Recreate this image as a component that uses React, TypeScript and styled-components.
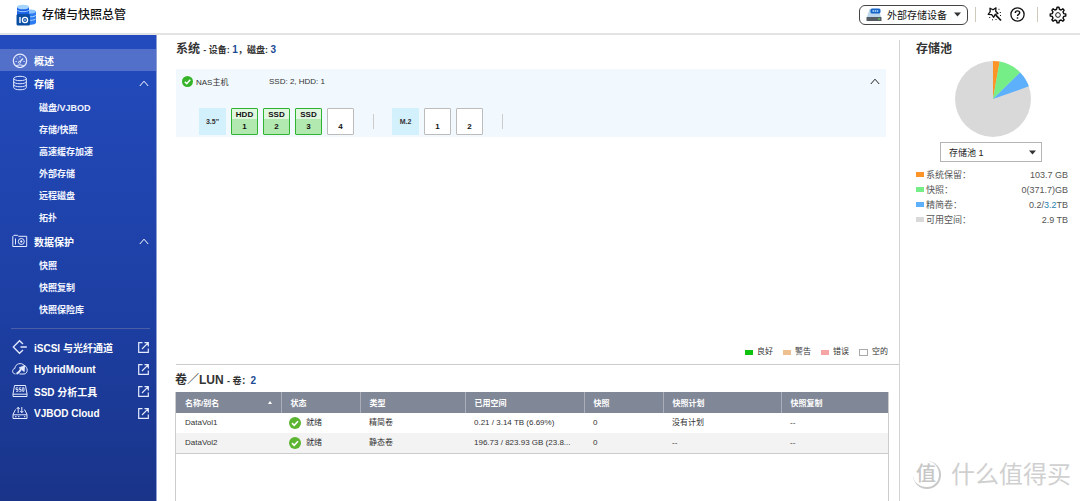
import React from 'react';
import styled, { createGlobalStyle, css } from 'styled-components';

const Global = createGlobalStyle`
  *, *::before, *::after { box-sizing: border-box; }
  body {
    margin: 0;
    background: #fff;
    color: #333;
    font-family: "Liberation Sans", "Noto Sans CJK SC", sans-serif;
    font-size: 8px;
  }
  #root { min-height: 100vh; display: flex; flex-direction: column; }
  h1, h2, ul, dl, dd { margin: 0; padding: 0; }
  ul { list-style: none; }
  svg { display: block; flex: none; }
`;

/* ---------- header ---------- */
const Header = styled.header`
  display: flex;
  align-items: center;
  justify-content: space-between;
  height: 35px;
  padding: 0 13px 4px 16px;
  border-bottom: 2px solid #e3e3e3;
`;
const Brand = styled.div`
  display: flex;
  align-items: center;
  gap: 5px;
`;
const Title = styled.h1`
  font-size: 12px;
  line-height: 20px;
  font-weight: 500;
  color: #111;
`;
const Tools = styled.div`
  display: flex;
  align-items: center;
`;
const DeviceButton = styled.button`
  display: flex;
  align-items: center;
  gap: 5px;
  height: 20px;
  padding: 0 6px;
  border: 1px solid #444;
  border-radius: 6px;
  background: #fff;
  color: #111;
  font: inherit;
  font-size: 10px;
`;
const DeviceName = styled.span`
  margin-right: 2px;
`;
const Divider = styled.span`
  width: 1px;
  height: 15px;
  margin: 0 11px 0 7px;
  background: #cfcabb;
`;
const ToolGroup = styled.div`
  display: flex;
  align-items: center;
  gap: 8px;
  margin-right: 5px;
`;
const IconButton = styled.button`
  display: flex;
  padding: 0;
  border: 0;
  background: none;
  color: #111;
`;

/* ---------- sidebar ---------- */
const Shell = styled.div`
  flex: 1;
  display: flex;
`;
const Sidebar = styled.nav`
  flex: none;
  width: 157px;
  padding-top: 14px;
  background: linear-gradient(#234bbd, #1d3fa3 60%, #193489);
  border-right: 1px solid #8fa0d4;
  color: #fff;
`;
const NavLink = styled.a<{ $active?: boolean }>`
  display: flex;
  align-items: center;
  gap: 6px;
  height: 22px;
  margin-bottom: ${(p) => (p.$active ? 1 : 0)}px;
  padding: 0 7px 0 12px;
  background: ${(p) => (p.$active ? '#5270c9' : 'transparent')};
  color: #fff;
  font-size: 10px;
  font-weight: 700;
  text-decoration: none;
`;
const NavLabel = styled.span`
  flex: 1;
`;
const SubLink = styled.a`
  display: flex;
  align-items: center;
  height: 22px;
  padding-left: 39px;
  color: #f2f5ff;
  font-size: 9px;
  font-weight: 700;
  text-decoration: none;
`;
const NavGroup = styled.ul`
  padding: 2px 0;
`;
const NavRule = styled.div`
  height: 1px;
  margin: 6px 6px 7px 11px;
  background: #4a5fa8;
`;

/* ---------- main ---------- */
const Main = styled.main`
  flex: 1;
  min-width: 0;
  display: flex;
  flex-direction: column;
  border-right: 1px solid #d4d4d4;
  margin-top: 5px;
`;
const SystemPanel = styled.section`
  display: flex;
  flex-direction: column;
  height: 325px;
  margin-left: 19px;
  border-bottom: 1px solid #ccc;
`;
const SectionTitle = styled.h2`
  font-size: 12px;
  line-height: 18px;
  font-weight: 700;
  color: #333;
  small { font-size: 9px; }
  b { font-size: 10px; color: #1c4a94; }
`;
const Enclosure = styled.div`
  margin: 10px 13px 0 0;
  padding: 0 6px 2px 6px;
  background: #f1f9fe;
`;
const EnclosureHead = styled.div`
  display: flex;
  align-items: center;
  height: 24px;
  gap: 3px;
`;
const HostName = styled.span`
  width: 70px;
`;
const Counts = styled.span`
  flex: 1;
`;
const PlainButton = styled.button`
  display: flex;
  padding: 0;
  border: 0;
  background: none;
  color: #222;
`;
const Slots = styled.div`
  display: flex;
  align-items: center;
  gap: 5px;
  padding: 15px 0 0 17px;
`;
const slotBox = css`
  width: 27px;
  height: 27px;
  font-size: 8px;
  font-weight: 700;
`;
const SlotKind = styled.span`
  ${slotBox}
  display: flex;
  align-items: center;
  justify-content: center;
  background: #d3f0fd;
  font-size: 7px;
`;
const SlotButton = styled.button<{ $used?: boolean }>`
  ${slotBox}
  display: flex;
  flex-direction: column;
  align-items: center;
  justify-content: flex-end;
  padding: 0 0 1px;
  border: 1px solid ${(p) => (p.$used ? '#2fb42f' : '#bcbcbc')};
  border-radius: 1px;
  background: ${(p) => (p.$used ? 'linear-gradient(#e0f6de 10px, #b2e9b0 10px)' : '#fff')};
  color: #111;
  font-family: inherit;
  line-height: 12px;
`;
const SlotRule = styled.span`
  width: 1px;
  height: 15px;
  margin: 0 13px 0 14px;
  background: #ccc;
`;
const Legend = styled.ul`
  display: flex;
  justify-content: flex-end;
  gap: 10px;
  margin-top: auto;
  padding: 0 11px 6px 0;
  line-height: 12px;
`;
const LegendItem = styled.li`
  display: flex;
  align-items: center;
  gap: 4px;
`;
const Swatch = styled.span<{ $color: string; $outline?: boolean }>`
  width: ${(p) => (p.$outline ? 9 : 8)}px;
  height: ${(p) => (p.$outline ? 7 : 5)}px;
  background: ${(p) => p.$color};
  border: ${(p) => (p.$outline ? '1px solid #aaa' : '0')};
`;
const VolumePanel = styled.section`
  flex: 1;
  display: flex;
  flex-direction: column;
  padding: 6px 10px 0 18px;
`;
const TableFrame = styled.div`
  flex: 1;
  margin-top: 2px;
  border: solid #ccc;
  border-width: 0 1px;
`;
const Table = styled.table`
  width: 100%;
  table-layout: fixed;
  border-collapse: collapse;
  border-bottom: 1px solid #ccc;
  th, td {
    padding: 0 9px;
    text-align: left;
    white-space: nowrap;
    overflow: hidden;
    text-overflow: ellipsis;
  }
  th {
    height: 21px;
    background: #808797;
    color: #fff;
    border-left: 1px solid #a9aeba;
  }
  th:first-child { border-left: 0; }
  td { height: 20px; line-height: 12px; }
  tbody tr:nth-child(even) { background: #f3f3f3; }
`;
const Col = styled.col<{ $w: number }>`
  width: ${(p) => p.$w}px;
`;
const HeadCell = styled.span`
  display: flex;
  align-items: center;
  justify-content: space-between;
`;
const Status = styled.span`
  display: flex;
  align-items: center;
  gap: 5px;
  margin-left: -1px;
`;

/* ---------- pool ---------- */
const Pool = styled.aside`
  flex: none;
  width: 180px;
  display: flex;
  flex-direction: column;
  padding: 5px 12px 8px 16px;
`;
const Chart = styled.div`
  display: flex;
  justify-content: center;
  padding: 3px 0 5px 2px;
`;
const SelectWrap = styled.label`
  display: grid;
  align-items: center;
  width: 102px;
  margin: 0 auto 5px 24px;
  > * { grid-area: 1 / 1; }
  > svg { justify-self: end; margin-right: 6px; pointer-events: none; }
`;
const Select = styled.select`
  appearance: none;
  width: 100%;
  height: 20px;
  padding: 1px 8px 0;
  border: 1px solid #b5b5b5;
  border-radius: 0;
  background: #fff;
  color: #222;
  font: inherit;
  font-size: 9px;
`;
const Usage = styled.dl`
  font-size: 9px;
  color: #555;
`;
const UsageRow = styled.div`
  display: flex;
  align-items: center;
  height: 15px;
  dt { flex: 1; display: flex; align-items: center; gap: 2px; }
  b { font-weight: 400; color: #1f7fae; }
`;
const Watermark = styled.div`
  display: flex;
  align-items: center;
  gap: 10px;
  margin: auto -2px 0 -3px;
  color: #d0d0d0;
  font-size: 24px;
  line-height: 36px;
  white-space: nowrap;
`;
const Seal = styled.span`
  flex: none;
  display: flex;
  align-items: center;
  justify-content: center;
  width: 28px;
  height: 28px;
  border-right: 2px solid #c9c9c9;
  border-bottom: 2px solid #c9c9c9;
  border-radius: 50%;
  color: #c6c6c6;
  font-size: 20px;
  font-weight: 500;
`;

/* ---------- drawings ---------- */
const Caret = () => (
  <svg width="7" height="5" viewBox="0 0 7 5"><path d="M0 0.5H7L3.5 4.5Z" fill="#333" /></svg>
);
const Chevron = () => (
  <svg width="10" height="7" viewBox="0 0 10 7" fill="none" stroke="currentColor"><path d="M0.8 6L5 1.2L9.2 6" /></svg>
);
const Logo = () => (
  <svg width="21" height="22" viewBox="0 0 21 22">
    <path d="M9 7.5v11c0 3 11 3 11 0v-11z" fill="#2c7bf0" />
    <path d="M9 11c1 2.400 10 2.400 11 0M9 14.500c1 2.400 10 2.400 11 0" fill="none" stroke="#a9d2ff" strokeWidth="1" />
    <ellipse cx="14.500" cy="7.500" rx="5.500" ry="2" fill="#8cc4fb" />
    <path d="M1 3v8h12V3z" fill="#1d62e6" />
    <path d="M1 6c1 2.200 11 2.200 12 0" fill="none" stroke="#9accff" strokeWidth="1" />
    <ellipse cx="7" cy="3" rx="6" ry="2.300" fill="#a5d5fd" />
    <rect x="0.500" y="10" width="13.500" height="11.500" rx="1.500" fill="#0b4fa5" />
    <path d="M4 13v6" stroke="#fff" strokeWidth="1.400" />
    <circle cx="9" cy="16" r="2.600" fill="none" stroke="#fff" strokeWidth="1.300" />
    <circle cx="9" cy="16" r="0.800" fill="#fff" />
  </svg>
);
const DriveIcon = () => (
  <svg width="16" height="14" viewBox="0 0 16 14">
    <path d="M3.500 1h9L15 9H1z" fill="#bcd6ee" />
    <rect x="0.500" y="9" width="15" height="4" rx="0.500" fill="#555c63" />
    <rect x="12" y="10.500" width="2" height="1" fill="#6be04d" />
    <rect x="4.500" y="0.500" width="10" height="5" rx="1.500" fill="#1565c8" />
    <path d="M6.500 3h6" stroke="#b8dcff" strokeWidth="1.400" strokeDasharray="1.500 0.600" />
  </svg>
);
const Wand = () => (
  <svg width="15" height="15" viewBox="0 0 15 15" fill="none" stroke="currentColor" strokeWidth="1.300">
    <path d="M3 1.200L6 2.800L9 0.900L8.700 4.300L11 6.500L8.200 7.300L6.700 10.300L4.700 7.700L1.200 7.400L3.200 4.700Z" strokeLinejoin="round" />
    <path d="M8.600 7.800L14 13.500" strokeWidth="1.700" />
    <path d="M11.500 2.300h1M12.800 5.500h1M2.200 10.500h1M5 12.800h1M13 8.500h1M8.500 12.500h1" strokeWidth="1" />
  </svg>
);
const Help = () => (
  <svg width="15" height="15" viewBox="0 0 15 15" fill="none" stroke="currentColor">
    <circle cx="7.500" cy="7.500" r="6.600" strokeWidth="1.300" />
    <path d="M5.300 5.900C5.300 3.100 9.700 3.200 9.700 5.800C9.700 7.400 7.500 7.300 7.500 9.100" strokeWidth="1.400" />
    <path d="M7.500 10.300v1.400" strokeWidth="1.500" />
  </svg>
);
const Gear = () => (
  <svg width="18" height="18" viewBox="0 0 19 19" fill="none" stroke="currentColor" strokeWidth="1.500">
    <path strokeLinejoin="round" d="M8.100 3.400L8.500 1.300H10.500L10.900 3.400L12.800 4.200L14.600 3L16 4.400L14.800 6.200L15.600 8.100L17.700 8.500V10.500L15.600 10.900L14.800 12.800L16 14.600L14.600 16L12.800 14.800L10.900 15.600L10.500 17.700H8.500L8.100 15.600L6.200 14.800L4.400 16L3 14.600L4.200 12.800L3.400 10.900L1.300 10.500V8.500L3.400 8.100L4.200 6.200L3 4.400L4.400 3L6.200 4.200Z" />
    <circle cx="9.500" cy="9.500" r="2.500" strokeWidth="1" />
  </svg>
);
const Check = ({ size, color }: { size: number; color: string }) => (
  <svg width={size} height={size} viewBox="0 0 12 12">
    <circle cx="6" cy="6" r="6" fill={color} />
    <path d="M3 6.200L5.200 8.300L9 4.200" fill="none" stroke="#fff" strokeWidth="1.600" />
  </svg>
);
const NavIcon = ({ children }: { children: React.ReactNode }) => (
  <svg width="16" height="16" viewBox="0 0 16 16" fill="none" stroke="#e4eaff" strokeWidth="1">{children}</svg>
);
const Gauge = () => (
  <NavIcon>
    <circle cx="8" cy="8.800" r="6.700" strokeWidth="1.200" />
    <path d="M8 9.800L11 6.500" strokeWidth="1.300" />
    <circle cx="7.500" cy="10.300" r="1" />
    <path d="M3.500 9.500h1.200M4.700 6l0.800 0.800M8 4.200v1.300M11.500 9.500h1.200M4 14c2.500-1.500 5.500-1.500 8 0" />
  </NavIcon>
);
const Disks = () => (
  <NavIcon>
    <ellipse cx="8" cy="3.500" rx="6.300" ry="2.200" />
    <path d="M1.700 3.500v9c0 3 12.600 3 12.600 0v-9M1.700 6.500c0 3 12.600 3 12.600 0M1.700 9.500c0 3 12.600 3 12.600 0" />
  </NavIcon>
);
const Protect = () => (
  <NavIcon>
    <path d="M0.800 13.500V3.500L2 2.300H5.500L6.500 3.300H14.700V13.500Z" />
    <path d="M3.500 5.500v6" />
    <circle cx="9.300" cy="8.500" r="3" />
    <circle cx="9.300" cy="8.500" r="0.800" fill="#e4eaff" />
  </NavIcon>
);
const Iscsi = () => (
  <NavIcon><path d="M11 5L7.500 1.700L1.300 8L7.500 14.300L11 11M8.500 8H14.800" strokeWidth="1.300" /></NavIcon>
);
const Hybrid = () => (
  <NavIcon>
    <path d="M3.500 13C-0.500 12.600 0 8 2.800 7.500C3.300 2.300 9.500 1.300 12 4.300C16.500 6 16 13 12 13H7.500" />
    <path d="M4.500 12.800C6.500 11.800 8 10 9 8.200" strokeWidth="2" />
    <path d="M7 6.800L13 4.300L12.300 10.800Z" fill="#e4eaff" strokeWidth="0.500" />
  </NavIcon>
);
const Ssd = () => (
  <NavIcon>
    <path d="M1 11L2.500 2.500H13.500L15 11V13.500H1ZM1 11.200H15" />
    <path d="M6 4.800H4V6.500H6V8.300H4M9.200 4.800H7.300V6.500H9.200V8.300H7.300M10.700 4.500V8.300H12V4.800H10.700" strokeWidth="0.900" />
  </NavIcon>
);
const Vjbod = () => (
  <NavIcon>
    <path d="M3.500 4.500L1 9.500V13.500H15V9.500L12.500 4.500M1 9.800H15M3 11.700H4.500M6 11.700H7.500M12 11.700H13.300" />
    <path d="M6.200 8V2.500M4.700 4L6.200 2.200L7.700 4M9.800 2V7.500M8.300 6L9.800 7.800L11.300 6" />
  </NavIcon>
);
const External = () => (
  <svg width="11" height="11" viewBox="0 0 11 11" fill="none" stroke="#e4eaff">
    <path d="M4.500 0.700H0.700V10.300H10.300V6.500M6.500 0.700H10.300V4.500M10.300 0.700L4 7" strokeWidth="1.200" />
  </svg>
);

const slices = [
  { color: '#fd9427', from: 0, to: 0.028 },
  { color: '#76ee87', from: 0.028, to: 0.127 },
  { color: '#5db0fb', from: 0.127, to: 0.196 },
];
const point = (f: number) =>
  `${38 + 38 * Math.sin(2 * Math.PI * f)} ${38 - 38 * Math.cos(2 * Math.PI * f)}`;
const Pie = () => (
  <svg width="76" height="76" viewBox="0 0 76 76">
    <circle cx="38" cy="38" r="38" fill="#d9d9d9" />
    {slices.map((s) => (
      <path key={s.color} fill={s.color} d={`M38 38L${point(s.from)}A38 38 0 0 1 ${point(s.to)}Z`} />
    ))}
  </svg>
);

/* ---------- data ---------- */
const storageItems = ['磁盘/VJBOD', '存储/快照', '高速缓存加速', '外部存储', '远程磁盘', '拓扑'];
const protectItems = ['快照', '快照复制', '快照保险库'];
const tools = [
  { label: 'iSCSI 与光纤通道', icon: <Iscsi /> },
  { label: 'HybridMount', icon: <Hybrid /> },
  { label: 'SSD 分析工具', icon: <Ssd /> },
  { label: 'VJBOD Cloud', icon: <Vjbod /> },
];
/* The fixed table layout stretches these widths in proportion. */
const columns = [
  { label: '名称/别名', width: 105 },
  { label: '状态', width: 79 },
  { label: '类型', width: 105 },
  { label: '已用空间', width: 119 },
  { label: '快照', width: 79 },
  { label: '快照计划', width: 118 },
  { label: '快照复制', width: 107 },
];
const volumes = [
  { name: 'DataVol1', type: '精简卷', used: '0.21 / 3.14 TB (6.69%)', snaps: 0, plan: '没有计划' },
  { name: 'DataVol2', type: '静态卷', used: '196.73 / 823.93 GB (23.8...', snaps: 0, plan: '--' },
];

export default function App() {
  return (
    <>
      <Global />
      <Header>
        <Brand>
          <Logo />
          <Title>存储与快照总管</Title>
        </Brand>
        <Tools>
          <DeviceButton type="button">
            <DriveIcon />
            <DeviceName>外部存储设备</DeviceName>
            <Caret />
          </DeviceButton>
          <Divider />
          <ToolGroup>
            <IconButton type="button" aria-label="向导"><Wand /></IconButton>
            <IconButton type="button" aria-label="帮助"><Help /></IconButton>
          </ToolGroup>
          <Divider />
          <IconButton type="button" aria-label="设置"><Gear /></IconButton>
        </Tools>
      </Header>
      <Shell>
        <Sidebar>
          <NavLink href="#overview" $active><Gauge /><NavLabel>概述</NavLabel></NavLink>
          <NavLink href="#storage"><Disks /><NavLabel>存储</NavLabel><Chevron /></NavLink>
          <NavGroup>
            {storageItems.map((t) => <li key={t}><SubLink href="#storage">{t}</SubLink></li>)}
          </NavGroup>
          <NavLink href="#protect"><Protect /><NavLabel>数据保护</NavLabel><Chevron /></NavLink>
          <NavGroup>
            {protectItems.map((t) => <li key={t}><SubLink href="#protect">{t}</SubLink></li>)}
          </NavGroup>
          <NavRule />
          {tools.map((t) => (
            <NavLink key={t.label} href="#tools">{t.icon}<NavLabel>{t.label}</NavLabel><External /></NavLink>
          ))}
        </Sidebar>
        <Main>
          <SystemPanel>
            <SectionTitle>系统 <small>- 设备: <b>1</b>，磁盘: <b>3</b></small></SectionTitle>
            <Enclosure>
              <EnclosureHead>
                <Check size={11} color="#35b42a" />
                <HostName>NAS主机</HostName>
                <Counts>SSD: 2, HDD: 1</Counts>
                <PlainButton type="button" aria-label="收起"><Chevron /></PlainButton>
              </EnclosureHead>
              <Slots>
                <SlotKind>3.5"</SlotKind>
                <SlotButton type="button" $used><span>HDD</span><span>1</span></SlotButton>
                <SlotButton type="button" $used><span>SSD</span><span>2</span></SlotButton>
                <SlotButton type="button" $used><span>SSD</span><span>3</span></SlotButton>
                <SlotButton type="button"><span>4</span></SlotButton>
                <SlotRule />
                <SlotKind>M.2</SlotKind>
                <SlotButton type="button"><span>1</span></SlotButton>
                <SlotButton type="button"><span>2</span></SlotButton>
                <SlotRule />
              </Slots>
            </Enclosure>
            <Legend>
              <LegendItem><Swatch $color="#0fc20f" />良好</LegendItem>
              <LegendItem><Swatch $color="#efc08f" />警告</LegendItem>
              <LegendItem><Swatch $color="#f5a5a5" />错误</LegendItem>
              <LegendItem><Swatch $color="#fff" $outline />空的</LegendItem>
            </Legend>
          </SystemPanel>
          <VolumePanel>
            <SectionTitle>卷／LUN <small>- 卷：<b>2</b></small></SectionTitle>
            <TableFrame>
              <Table>
                <colgroup>{columns.map((c) => <Col key={c.label} $w={c.width} />)}</colgroup>
                <thead>
                  <tr>
                    {columns.map((c, i) => (
                      <th key={c.label} scope="col">
                        <HeadCell>
                          {c.label}
                          {i === 0 && <svg width="4" height="3" viewBox="0 0 4 3"><path d="M0 3L2 0L4 3Z" fill="#fff" /></svg>}
                        </HeadCell>
                      </th>
                    ))}
                  </tr>
                </thead>
                <tbody>
                  {volumes.map((v) => (
                    <tr key={v.name}>
                      <td>{v.name}</td>
                      <td><Status><Check size={12} color="#5cb531" />就绪</Status></td>
                      <td>{v.type}</td>
                      <td>{v.used}</td>
                      <td>{v.snaps}</td>
                      <td>{v.plan}</td>
                      <td>--</td>
                    </tr>
                  ))}
                </tbody>
              </Table>
            </TableFrame>
          </VolumePanel>
        </Main>
        <Pool>
          <SectionTitle>存储池</SectionTitle>
          <Chart><Pie /></Chart>
          <SelectWrap>
            <Select aria-label="存储池"><option>存储池 1</option></Select>
            <Caret />
          </SelectWrap>
          <Usage>
            <UsageRow><dt><Swatch $color="#fd9427" />系统保留：</dt><dd>103.7 GB</dd></UsageRow>
            <UsageRow><dt><Swatch $color="#76ee87" />快照：</dt><dd>0(371.7)GB</dd></UsageRow>
            <UsageRow><dt><Swatch $color="#5db0fb" />精简卷：</dt><dd>0.2/<b>3.2</b>TB</dd></UsageRow>
            <UsageRow><dt><Swatch $color="#d9d9d9" />可用空间：</dt><dd>2.9 TB</dd></UsageRow>
          </Usage>
          <Watermark><Seal>值</Seal>什么值得买</Watermark>
        </Pool>
      </Shell>
    </>
  );
}
